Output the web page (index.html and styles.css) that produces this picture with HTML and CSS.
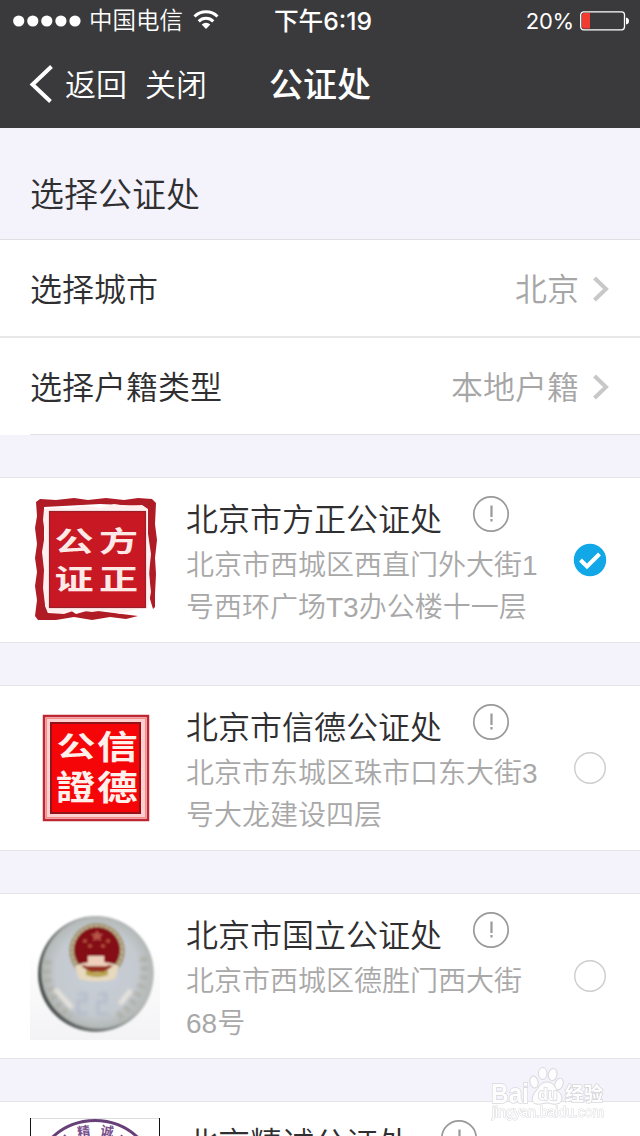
FILE: index.html
```html
<!DOCTYPE html>
<html lang="zh-CN">
<head>
<meta charset="utf-8">
<title>公证处</title>
<link rel="stylesheet" href="styles.css">
</head>
<body>
<div class="screen">
  <header class="header">
    <div class="status">
      <div class="carrier">
        <svg class="signal" width="68" height="12" viewBox="0 0 68 12" fill="#fff"><circle cx="5.7" cy="6" r="5.6"/><circle cx="19.8" cy="6" r="5.6"/><circle cx="33.8" cy="6" r="5.6"/><circle cx="47.9" cy="6" r="5.6"/><circle cx="62" cy="6" r="5.6"/></svg>
        <span>中国电信</span>
        <svg class="wifi" width="26" height="20" viewBox="0 0 26 20"><path d="M1.5 6.5a16.5 16.5 0 0 1 23 0M5.7 11.3a10.5 10.5 0 0 1 14.600 0" fill="none" stroke="#fff" stroke-width="3"/><path d="M8.700 14.600a6.200 6.200 0 0 1 8.600 0L13 19z" fill="#fff"/></svg>
      </div>
      <div class="clock">下午6:19</div>
      <div class="power">
        <span>20%</span>
        <svg width="50" height="20" viewBox="0 0 50 20"><rect x=".7" y=".8" width="43.800" height="18" rx="3" fill="none" stroke="#fff" stroke-width="1.300"/><path d="M2 4q0-2 2-2h6v15.500H4q-2 0-2-2z" fill="#f33b30"/><path d="M46 6.500q3 .5 3 3.500t-3 3.500z" fill="#fff"/></svg>
      </div>
    </div>
    <nav class="nav">
      <div class="nav-left">
        <svg width="24" height="40" viewBox="0 0 24 40"><path d="M22.500 2.500L3.500 20.500l18 17" fill="none" stroke="#fff" stroke-width="4"/></svg>
        <span>返回</span><span class="close">关闭</span>
      </div>
      <h1 class="title">公证处</h1>
    </nav>
  </header>

  <h2 class="section">选择公证处</h2>
  <div class="row">
    <span>选择城市</span>
    <span class="value"><span>北京</span><svg width="18" height="28" viewBox="0 0 18 28"><path d="M2.500 3l11.500 11L2.500 25" fill="none" stroke="#c8c8c8" stroke-width="4"/></svg></span>
  </div>
  <div class="row row-last">
    <span>选择户籍类型</span>
    <span class="value"><span>本地户籍</span><svg width="18" height="28" viewBox="0 0 18 28"><path d="M2.500 3l11.500 11L2.500 25" fill="none" stroke="#c8c8c8" stroke-width="4"/></svg></span>
  </div>

  <main class="list">
    <article class="card">
      <svg class="logo" width="130" height="130" viewBox="0 0 130 130">
        <path d="M6 8L10 5 26 6 44 4 58 6 76 4 94 6 108 4 122 5 126 9 125 30 127 46 125 64 126 80 125 100 125 113 123 115 120 105 118 40 114 12 70 10 14 13 14 70 15 112 18 119 40 116 46 120 60 116 84 119 108 122 96 125 80 123 62 126 44 123 26 126 8 126 5 122 7 106 5 92 7 78 5 64 7 50 5 34 7 22z" fill="#b01c26"/>
        <path d="M14 15L28 13 40 15 54 11 70 14 84 10 96 12 112 11 118 15 118 40 121 60 119 80 121 98 118 114 104 116 90 120 76 116 62 118 46 116 34 120 18 119 15 110 13 94 14 76 12 58 15 40 13 26z" fill="#fff0ef"/>
        <rect x="19.500" y="17.500" width="96" height="96" fill="#c71823" stroke="#97202a" stroke-width="1.200"/>
        <g class="seal" fill="#ffe9e6"><text transform="translate(24.500 58) scale(1.150 .82)">公</text><text transform="translate(69 58) scale(1.150 .82)">方</text><text transform="translate(24.500 96) scale(1.150 .82)">证</text><text transform="translate(69 96) scale(1.150 .82)">正</text></g>
      </svg>
      <div class="info">
        <div class="name"><span>北京市方正公证处</span><svg class="tip" width="38" height="38" viewBox="0 0 38 38"><circle cx="19" cy="19" r="17.200" fill="none" stroke="#999" stroke-width="1.700"/><path d="M19.500 10.500v11.500M19.500 24v2.500" stroke="#999" stroke-width="2.200"/></svg></div>
        <p class="address">北京市西城区西直门外大街1<br>号西环广场T3办公楼十一层</p>
      </div>
      <svg class="choice" width="34" height="34" viewBox="0 0 34 34"><circle cx="17" cy="17" r="16.200" fill="#12a8e8"/><path d="M7.500 17l6.500 6.500L26.500 11" fill="none" stroke="#fff" stroke-width="4"/></svg>
    </article>

    <article class="card">
      <svg class="logo" width="130" height="130" viewBox="0 0 130 130">
        <rect x="14" y="14" width="104" height="104" fill="#ffd0d0" stroke="#bd2833" stroke-width="2.500"/>
        <rect x="16.500" y="16.500" width="99" height="99" fill="none" stroke="#f58c8c" stroke-width="1"/>
        <rect x="21" y="21" width="89" height="90" fill="#f50507" stroke="#901419" stroke-width="2"/>
        <g class="seal" fill="#fff0ec"><text transform="translate(26.500 55) scale(1.150 .84)">公</text><text transform="translate(67 57) scale(1.200 .98)">信</text><text transform="translate(26 98) scale(1.150 1)">證</text><text transform="translate(67 98) scale(1.200 1)">德</text></g>
      </svg>
      <div class="info">
        <div class="name"><span>北京市信德公证处</span><svg class="tip" width="38" height="38" viewBox="0 0 38 38"><circle cx="19" cy="19" r="17.200" fill="none" stroke="#999" stroke-width="1.700"/><path d="M19.500 10.500v11.500M19.500 24v2.500" stroke="#999" stroke-width="2.200"/></svg></div>
        <p class="address">北京市东城区珠市口东大街3<br>号大龙建设四层</p>
      </div>
      <svg class="choice" width="34" height="34" viewBox="0 0 34 34"><circle cx="17" cy="17" r="15.300" fill="none" stroke="#ccc" stroke-width="1.400"/></svg>
    </article>

    <article class="card">
      <svg class="logo" width="130" height="130" viewBox="0 0 130 130">
        <defs>
          <linearGradient id="paper" x2="0" y2="1"><stop offset=".3" stop-color="#fff"/><stop offset="1" stop-color="#f3f3f5"/></linearGradient>
          <linearGradient id="rim" x1="0" y1=".7" x2="1" y2=".35"><stop stop-color="#454b49"/><stop offset=".5" stop-color="#8b918f"/><stop offset="1" stop-color="#e0e0da"/></linearGradient>
          <radialGradient id="disc"><stop stop-color="#c8ced8"/><stop offset=".75" stop-color="#c5cad0"/><stop offset="1" stop-color="#b2b7b5"/></radialGradient>
          <filter id="soft"><feGaussianBlur stdDeviation=".8"/></filter>
          <filter id="faint"><feGaussianBlur stdDeviation="1.800"/></filter>
        </defs>
        <rect width="130" height="130" fill="url(#paper)"/>
        <g filter="url(#soft)">
          <circle cx="66" cy="64" r="58" fill="url(#rim)"/>
          <circle cx="67.500" cy="62.500" r="56" fill="url(#disc)"/>
          <g filter="url(#faint)">
            <path d="M18 50q-5 35 23 57M113 47q7 33-25 60" fill="none" stroke="#aaa99c" stroke-width="8" stroke-dasharray="5 4" opacity=".7"/>
            <path d="M25 79l17 19M101 80l-11 14" stroke="#eee8df" stroke-width="4"/>
            <path d="M48 84h8v7h-8v12h10M68 84h8v8h-8v12h10" fill="none" stroke="#acb6c6" stroke-width="3" opacity=".7"/>
          </g>
          <circle cx="67" cy="41" r="28" fill="#a29778"/>
          <circle cx="67" cy="41" r="25" fill="none" stroke="#c6b58e" stroke-width="2" stroke-dasharray="3 2"/>
          <circle cx="67" cy="40" r="23" fill="#850e17"/>
          <path d="M45 56q22-9 44 0l-4 13q-18 5-36 0z" fill="#e6d9bd"/>
          <path d="M51 56q16-5 32 0l-9 6H60z" fill="#963023"/>
          <path d="M58 46h16v7h6l-3 3H56l-3-3h5z" fill="#efd0bd"/>
          <path d="M56 60q11 5 22 0v5q-11 4-22 0z" fill="#b8a450"/>
          <path d="M67 20l2 4h4l-3 3 1 4-4-2-4 2 1-4-3-3h4z" fill="#b85448"/>
          <g fill="#b85542"><circle cx="55" cy="31" r="1.800"/><circle cx="78" cy="31" r="1.800"/><circle cx="60" cy="36" r="1.800"/><circle cx="73" cy="36" r="1.800"/></g>
        </g>
      </svg>
      <div class="info">
        <div class="name"><span>北京市国立公证处</span><svg class="tip" width="38" height="38" viewBox="0 0 38 38"><circle cx="19" cy="19" r="17.200" fill="none" stroke="#999" stroke-width="1.700"/><path d="M19.500 10.500v11.500M19.500 24v2.500" stroke="#999" stroke-width="2.200"/></svg></div>
        <p class="address">北京市西城区德胜门西大街<br>68号</p>
      </div>
      <svg class="choice" width="34" height="34" viewBox="0 0 34 34"><circle cx="17" cy="17" r="15.300" fill="none" stroke="#ccc" stroke-width="1.400"/></svg>
    </article>

    <article class="card">
      <svg class="logo" width="130" height="130" viewBox="0 0 130 130">
        <path d="M.5 0v130M129.500 0v130" stroke="#111"/><path d="M1 .5h128" stroke="#ddd"/>
        <circle cx="65" cy="65" r="62.500" fill="#fff" stroke="#684078" stroke-width="3"/>
        <g class="ring" fill="#79508c"><text transform="translate(48 19) rotate(-8)">精</text><text transform="translate(70 17) rotate(8)">诚</text></g>
        <path d="M34 17l3 3M92 17l-2 4" stroke="#79508c" stroke-width="2"/>
      </svg>
      <div class="info">
        <div class="name"><span>北京精诚公证处</span><svg class="tip" width="38" height="38" viewBox="0 0 38 38"><circle cx="19" cy="19" r="17.200" fill="none" stroke="#999" stroke-width="1.700"/><path d="M19.500 10.500v11.500M19.500 24v2.500" stroke="#999" stroke-width="2.200"/></svg></div>
      </div>
    </article>
  </main>

  <svg class="watermark" width="120" height="58" viewBox="0 0 120 58">
    <g fill="#fff" stroke="#d5d5da" stroke-width="1">
      <ellipse cx="46" cy="17" rx="4" ry="6" transform="rotate(-15 46 17)"/><ellipse cx="54.700" cy="8.500" rx="4.300" ry="6"/><ellipse cx="64.700" cy="9.500" rx="4.300" ry="6" transform="rotate(12 64.700 9.500)"/><ellipse cx="71" cy="19" rx="4" ry="6" transform="rotate(20 71 19)"/>
      <path d="M59 17C66 17 67 23 70 26C76 31 75 38 69 39C65 40 62 38 59 38C55 38 52 40 48 39C43 38 43 31 48 26C51 23 52 17 59 17z"/>
      <g paint-order="stroke" stroke-width="1.500"><text class="wm-latin" x="3" y="38" textLength="38" lengthAdjust="spacingAndGlyphs">Bai</text><text class="wm-du" x="50" y="35">du</text><text class="wm-cjk" x="77" y="36" textLength="38">经验</text><text class="wm-url" x="4" y="52" stroke-width="1" textLength="112" lengthAdjust="spacingAndGlyphs">jingyan.baidu.com</text></g>
    </g>
  </svg>
</div>
</body>
</html>
```
FILE: styles.css
```css
* { box-sizing: border-box; }
body {
  margin: 0;
  font-family: "Liberation Sans", "Noto Sans CJK SC DemiLight", "Noto Sans CJK SC", sans-serif;
  font-weight: 350;
  color: #2f2f31;
}
svg { display: block; flex: none; }
.screen {
  position: relative;
  width: 640px;
  height: 1136px;
  overflow: hidden;
  background: #f4f2fa;
}

.header { height: 128px; background: #3a3a3c; color: #fff; }
.status {
  display: grid;
  grid-template-columns: 1fr auto 1fr;
  align-items: center;
  height: 40px;
  padding: 1px 10px 0 13px;
  font-size: 24px;
  line-height: 40px;
}
.carrier { display: flex; align-items: center; }
.signal { margin-right: 8px; }
.carrier span { font-size: 23.500px; }
.wifi { margin: 0 0 2px 10px; }
.clock { padding-left: 3px; font-family: Inter, "Noto Sans CJK SC", sans-serif; font-size: 24.700px; font-weight: 500; line-height: 38px; }
.power { display: flex; align-items: center; justify-content: flex-end; gap: 6px; font-family: Inter, sans-serif; font-size: 22px; font-weight: 400; letter-spacing: -.2px; }
.nav {
  display: grid;
  grid-template-columns: 1fr auto 1fr;
  align-items: center;
  height: 88px;
  padding-left: 29px;
  padding-right: 29px;
}
.nav-left { display: flex; align-items: center; font-size: 31px; }
.nav-left span { padding-bottom: 4px; }
.nav-left svg { margin-right: 12px; }
.close { margin-left: 18px; }
.title { margin: 0; padding-bottom: 3px; font-family: "Liberation Sans", "Noto Sans CJK SC", sans-serif; font-size: 34px; font-weight: 500; }

.section {
  height: 112px;
  margin: 0;
  padding: 12px 30px 0;
  border-bottom: 1px solid #dfdfe1;
  font-size: 34px;
  font-weight: 350;
  line-height: 110px;
}
.row {
  display: flex;
  justify-content: space-between;
  align-items: center;
  height: 98px;
  padding: 1px 30px 0;
  border-bottom: 2px solid #e7e7e8;
  background: #fff;
  font-size: 32px;
}
.row > span:first-child, .value span { padding-bottom: 4px; }
.row-last {
  height: 97px;
  border-bottom: 0;
  background: linear-gradient(#e2e2e4, #e2e2e4) 30px 100% / 610px 1px no-repeat #fff;
}
.value { display: flex; align-items: center; gap: 13px; color: #a6a6a6; }

.list { display: flex; flex-direction: column; gap: 42px; padding-top: 42px; }
.card {
  display: flex;
  flex: none;
  height: 166px;
  padding: 16px 33px 0 30px;
  border-top: 1px solid #e3e3e5;
  border-bottom: 1px solid #e3e3e5;
  background: #fff;
}
.logo { margin-right: 26px; }
.info { flex: 1; padding-top: 5px; }
.name { display: flex; font-size: 32px; line-height: 42px; white-space: nowrap; }
.tip { margin: -4px 0 0 30px; }
.address { margin: 4px 0 0; color: #a8a8a8; font-size: 28px; line-height: 42px; white-space: nowrap; }
.choice { margin-top: 49px; }
.seal { font-family: "Noto Sans CJK TC", "Noto Sans CJK SC", sans-serif; font-size: 34px; font-weight: 700; }
.ring { font-family: "Noto Sans CJK SC", sans-serif; font-size: 13px; font-weight: 700; }

.watermark { position: absolute; left: 488px; top: 1065px; opacity: .9; }
.wm-latin { font: 700 27px "Liberation Sans", sans-serif; }
.wm-du { font: 700 16px "Liberation Sans", sans-serif; }
.wm-cjk { font: 700 19px "Noto Sans CJK SC", sans-serif; }
.wm-url { font: 400 14px "Liberation Sans", sans-serif; }
```
